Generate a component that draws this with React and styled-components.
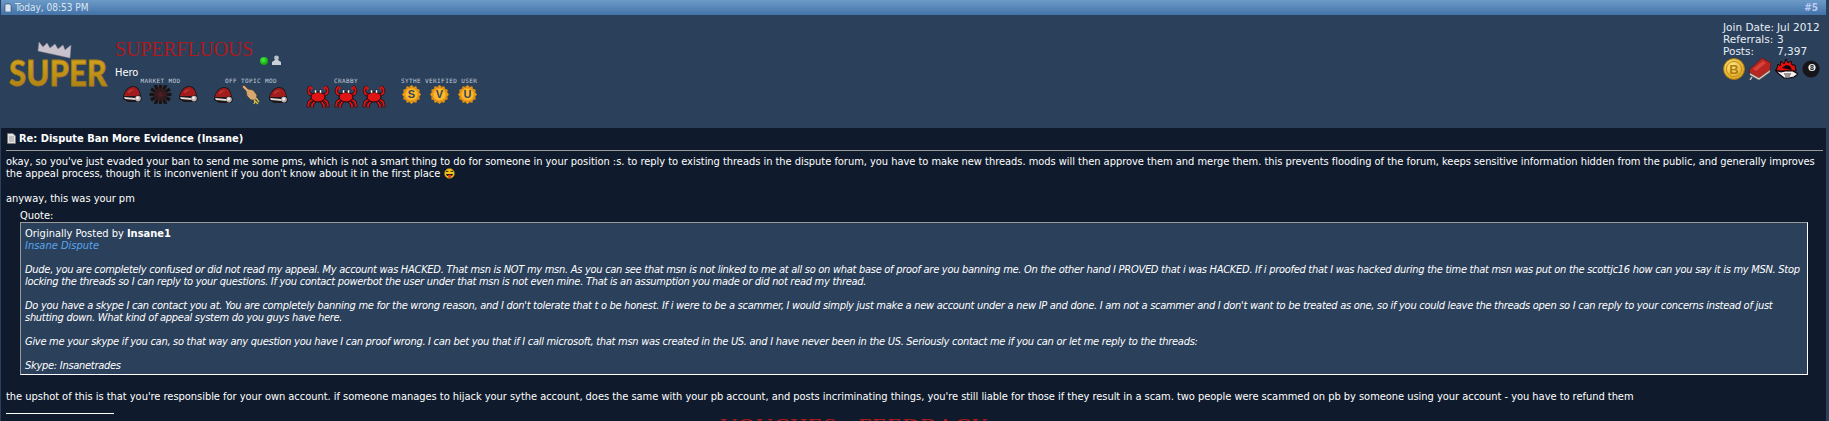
import React from 'react'
import styled, { createGlobalStyle } from 'styled-components'

const Global = createGlobalStyle`
  html, body {
    margin: 0;
    height: 421px;
    overflow: hidden;
    background: #2b405b;
  }
  body {
    font-family: "DejaVu Sans Condensed", "DejaVu Sans", sans-serif;
    font-size: 11px;
    line-height: 12px;
    color: #fff;
  }
`

const Page = styled.div`
  display: flex;
  flex-direction: column;
  height: 421px;
  overflow: hidden;
  padding: 0 3px 0 1px;
`

const TitleBar = styled.div`
  display: flex;
  align-items: center;
  justify-content: space-between;
  flex: 0 0 15px;
  padding: 0 8px 0 3px;
  background: linear-gradient(#6d9bc8, #4372a8);
  color: #dbe6f2;
`

const DateText = styled.span`
  display: flex;
  align-items: center;
  gap: 3px;
  font-size: 10px;
`

const PostNumber = styled.span`
  color: #bcc9f2;
  font-weight: bold;
  font-size: 10px;
`

const UserHeader = styled.div`
  display: flex;
  justify-content: space-between;
  flex: 0 0 113px;
  background: #2b405b;
`

const UserLeft = styled.div`
  display: flex;
  padding: 22px 0 0 7px;
`

const UserInfo = styled.div`
  display: flex;
  flex-direction: column;
  margin-left: 5px;
`

const NameRow = styled.div`
  display: flex;
  align-items: flex-end;
  gap: 4px;
  height: 28px;
`

const Name = styled.span`
  font-family: "Liberation Serif", serif;
  font-size: 20px;
  line-height: 24px;
  letter-spacing: -0.2px;
  color: #ab1a1c;
  margin-right: 3px;
  position: relative;
  top: -4px;
`

const Rank = styled.div`
  line-height: 14px;
  margin-top: 1px;
`

const Badges = styled.div`
  display: flex;
  margin: -2px 0 0 8px;
`

const BadgeGroup = styled.div`
  display: flex;
  flex-direction: column;
  align-items: center;
  margin-right: ${p => p.$gap || 0}px;
`

const BadgeLabel = styled.span`
  font-family: "DejaVu Sans Mono", monospace;
  font-size: 6px;
  line-height: 6px;
  letter-spacing: 0.4px;
  color: #c4d0dc;
  white-space: nowrap;
`

const BadgeIcons = styled.div`
  display: flex;
  align-items: center;
  gap: ${p => p.$gap}px;
  margin-top: 1px;
`

const UserStats = styled.div`
  display: flex;
  flex-direction: column;
  width: 103px;
  padding-top: 6px;
  color: #e6edf5;
  font-family: "DejaVu Sans", sans-serif;
  font-size: 10.5px;
`

const StatsGrid = styled.div`
  display: grid;
  grid-template-columns: 54px auto;
`

const Awards = styled.div`
  display: flex;
  align-items: center;
  gap: 4px;
  margin-top: 1px;
`

const PostBody = styled.div`
  flex: 1;
  background: #0f1b2c;
  padding: 4px 3px 0 5px;
  min-height: 0;
`

const PostTitle = styled.div`
  display: flex;
  align-items: center;
  gap: 3px;
  font-weight: bold;
  line-height: 13px;
  padding-left: 1px;
`

const Rule = styled.div`
  height: 1px;
  background: #9a9a9a;
  margin: 5px 0 5px;
`

const Paragraph = styled.div`
  letter-spacing: -0.03px;
`

const Spacer = styled.div`
  height: 13px;
`

const QuoteWrap = styled.div`
  margin: 5px 15px 0 14px;
`

const QuoteBox = styled.div`
  padding: 5px 4px 3px;
  height: 153px;
  box-sizing: border-box;
  background: #2b405b;
  border: 1px solid;
  border-color: #9a9a9a #fff #fff #9a9a9a;
`

const QuoteAuthor = styled.b`
  font-weight: bold;
`

const QuoteTitle = styled.div`
  color: #5aa6ee;
  font-style: italic;
`

const QuoteText = styled.div`
  font-style: italic;
  letter-spacing: -0.28px;
  margin-top: 12px;
`

const After = styled.div`
  margin-top: 16px;
`

const SigRule = styled.div`
  width: 108px;
  height: 1px;
  background: #fff;
  margin-top: 10px;
`

const SigTitle = styled.div`
  font-family: "Liberation Serif", serif;
  font-size: 24px;
  line-height: 24px;
  color: #a81a1c;
  text-align: center;
  margin-left: -120px;
  letter-spacing: 0.5px;
`

const Emoji = styled.svg`
  vertical-align: -2px;
  margin-left: 1px;
`

function NoteIcon() {
  return (
    <svg width="8" height="9" viewBox="0 0 8 9">
      <path d="M1 1h5l1 1v7H1z" fill="#dfe6f0" stroke="#23406a" strokeWidth="0.6" />
    </svg>
  )
}

function DocIcon() {
  return (
    <svg width="9" height="11" viewBox="0 0 9 11">
      <path d="M.5.5h5.5l2.5 2.5v7.5h-8z" fill="#e4e4e4" stroke="#777" strokeWidth="0.7" />
      <path d="M2 4h5M2 6h5M2 8h5" stroke="#888" strokeWidth="0.8" />
    </svg>
  )
}

function Logo() {
  return (
    <svg width="102" height="52" viewBox="0 0 102 52">
      <defs>
        <linearGradient id="gold" x1="0" x2="0" y1="0" y2="1">
          <stop offset="0" stopColor="#dcaa22" />
          <stop offset="1" stopColor="#a67c12" />
        </linearGradient>
      </defs>
      <path
        d="M30 14L31 5l4 5 4-4 3 5 5-4 3 5 5-4 2 5 6-5-1 13z"
        fill="#c9c2cc"
        stroke="#8f8a96"
        strokeWidth="0.5"
      />
      <text
        transform="translate(1 49) scale(0.86 1)"
        textLength="114"
        lengthAdjust="spacingAndGlyphs"
        fontFamily="Lato, sans-serif"
        fontWeight="900"
        fontSize="36"
        fill="url(#gold)"
        stroke="#a67c12"
        strokeWidth="0.8"
      >
        SUPER
      </text>
    </svg>
  )
}

function SantaHat() {
  return (
    <svg width="19" height="17" viewBox="0 0 19 17">
      <path d="M0 11C1 5 5 0 10 0c5 0 7 4 8 10l1 3-2 3H5l-5-3z" fill="#1e1618" />
      <path d="M1 10C2 5 6 1 10 1c4 0 6 3 7 8l-5 1z" fill="#a31c1d" />
      <path d="M5 6c2-2 4-3 6-2-2 0-4 1-5 3z" fill="#c84a48" />
      <path d="M1 11l11 1 1 2-11-1z" fill="#e4dcdc" />
      <circle cx="15" cy="12.6" r="2.8" fill="#b8b0b0" />
      <circle cx="14.6" cy="12" r="1.5" fill="#f0eaea" />
    </svg>
  )
}

function SpikyBall() {
  const spikes = [0, 30, 60, 90, 120, 150]
  return (
    <svg width="23" height="19" viewBox="0 0 23 19">
      <g transform="translate(11.5 9.5)">
        {spikes.map(a => (
          <path key={a} d="M-11-1.6L11-1.6 11 1.6-11 1.6z" fill="#181416" transform={`rotate(${a})`} />
        ))}
        <circle r="6.6" fill="#221a1c" />
        {spikes.map(a => (
          <path key={a} d="M-8 0L8 0" stroke="#5a2024" strokeWidth="0.7" transform={`rotate(${a + 15})`} />
        ))}
      </g>
    </svg>
  )
}

function Chicken() {
  return (
    <svg width="20" height="20" viewBox="0 0 20 20">
      <path d="M1 2l2-2 4 4 5 1 4 5-1 5-5 0-4-4-1-5z" fill="#d6a872" stroke="#4a3420" strokeWidth="0.7" />
      <path d="M13 15l4 4M15 13l3 4M14 16l-1 3" stroke="#d9c040" strokeWidth="1.3" />
    </svg>
  )
}

function Crab() {
  return (
    <svg width="24" height="23" viewBox="0 0 24 23">
      <g fill="none" stroke="#1a0808" strokeWidth="3" strokeLinecap="round">
        <path d="M4 2C1 5 2 9 6 10M20 2c3 3 2 7-2 8M7 14l-4 3-1 4M17 14l4 3 1 4M9 16l-3 4v2M15 16l3 4v2" />
      </g>
      <g fill="none" stroke="#e01414" strokeWidth="1.8" strokeLinecap="round">
        <path d="M4 2C1 5 2 9 6 10M20 2c3 3 2 7-2 8M7 14l-4 3-1 4M17 14l4 3 1 4M9 16l-3 4v2M15 16l3 4v2" />
      </g>
      <path d="M4 1l3 2-2 3z" fill="#e01414" />
      <path d="M20 1l-3 2 2 3z" fill="#e01414" />
      <ellipse cx="12" cy="12" rx="7" ry="5" fill="#e01414" stroke="#1a0808" />
      <rect x="8.5" y="5" width="2" height="3" fill="#fff" stroke="#222" strokeWidth="0.5" />
      <rect x="13.5" y="5" width="2" height="3" fill="#fff" stroke="#222" strokeWidth="0.5" />
    </svg>
  )
}

function Sun({ letter }) {
  const rays = [0, 30, 60, 90, 120, 150, 180, 210, 240, 270, 300, 330]
  return (
    <svg width="19" height="19" viewBox="0 0 19 19">
      <g transform="translate(9.5 9.5)">
        {rays.map(a => (
          <path key={a} d="M-2.4-7.4L0-9.5 2.4-7.4z" fill="#ee9610" transform={`rotate(${a})`} />
        ))}
        <circle r="7.6" fill="#f29e14" />
        <circle r="5.8" fill="#ffb92c" />
      </g>
      <text
        x="9.5"
        y="13"
        textAnchor="middle"
        fontFamily="Liberation Sans, sans-serif"
        fontWeight="bold"
        fontSize="11"
        fill="#34465c"
      >
        {letter}
      </text>
    </svg>
  )
}

function Person() {
  return (
    <svg width="9" height="10" viewBox="0 0 9 10">
      <circle cx="4.5" cy="3" r="2.4" fill="#b8c0c8" />
      <path d="M3 5h3l3 2v3H0V7z" fill="#c8d0d8" />
    </svg>
  )
}

function Online() {
  return (
    <svg width="8" height="8" viewBox="0 0 8 8">
      <defs>
        <radialGradient id="on" cx="0.4" cy="0.35" r="0.7">
          <stop offset="0" stopColor="#4cf03c" />
          <stop offset="1" stopColor="#0c9a0c" />
        </radialGradient>
      </defs>
      <circle cx="4" cy="4" r="4" fill="url(#on)" />
    </svg>
  )
}

function Bitcoin() {
  return (
    <svg width="22" height="22" viewBox="0 0 22 22">
      <defs>
        <radialGradient id="coin" cx="0.4" cy="0.35" r="0.75">
          <stop offset="0" stopColor="#ffe88a" />
          <stop offset="1" stopColor="#d89a10" />
        </radialGradient>
      </defs>
      <circle cx="11" cy="11" r="10.5" fill="url(#coin)" stroke="#a87408" />
      <circle cx="11" cy="11" r="7.6" fill="none" stroke="#c48c10" />
      <text x="11" y="15.5" textAnchor="middle" fontFamily="Liberation Sans, sans-serif" fontWeight="bold" fontSize="13" fill="#b07c08">
        B
      </text>
    </svg>
  )
}

function Book() {
  return (
    <svg width="22" height="22" viewBox="0 0 22 22">
      <path d="M0 12L13 0l9 5-1 7-11 8-9-5z" fill="#b82622" stroke="#5e1210" strokeWidth="0.6" />
      <path d="M4 11L14 3l3 2-10 8z" fill="#d8423a" />
      <path d="M1 15l9 5 11-8v2l-11 8-9-5z" fill="#e0d8c8" stroke="#7a6a5a" strokeWidth="0.5" />
      <path d="M3 19l-2 3" stroke="#c8c0b0" strokeWidth="1.4" />
    </svg>
  )
}

function FlameHand() {
  return (
    <svg width="23" height="20" viewBox="0 0 23 20">
      <path d="M1 12L3 5l2 2 1-5 3 3 2-5 2 4 3-2 1 4 3 0 1 6z" fill="#e01010" stroke="#120404" strokeWidth="1" />
      <path d="M7 9l4-3 4 1 2 4z" fill="#120404" />
      <path d="M0 11l6 2 4-1 8 0 5 3-4 3-5 1H9l-5-4z" fill="#f6f2f2" stroke="#120404" strokeWidth="1.1" />
      <path d="M9 15h7M10 17h5" stroke="#120404" strokeWidth="0.8" />
    </svg>
  )
}

function EightBall() {
  return (
    <svg width="18" height="18" viewBox="0 0 18 18">
      <circle cx="9" cy="9" r="8.6" fill="#16161a" />
      <circle cx="10" cy="7.5" r="3.6" fill="#f2f2f2" />
      <text x="10" y="10" textAnchor="middle" fontFamily="Liberation Sans, sans-serif" fontWeight="bold" fontSize="7" fill="#111">
        8
      </text>
    </svg>
  )
}

function TongueFace() {
  return (
    <Emoji width="11" height="11" viewBox="0 0 11 11">
      <circle cx="5.5" cy="5.5" r="5" fill="#f2c21c" stroke="#8a6a10" strokeWidth="0.6" />
      <path d="M2 3.4h2.4M6.6 3.4H9" stroke="#222" strokeWidth="1" />
      <path d="M2 6h7L8 8H3z" fill="#2a1a10" />
      <path d="M4 7h3.4L7 10H4.4z" fill="#e04030" />
    </Emoji>
  )
}

export default function App() {
  return (
    <Page>
      <Global />
      <TitleBar>
        <DateText>
          <NoteIcon />
          Today, 08:53 PM
        </DateText>
        <PostNumber>#5</PostNumber>
      </TitleBar>

      <UserHeader>
        <UserLeft>
          <Logo />
          <UserInfo>
            <NameRow>
              <Name>SUPERFLUOUS</Name>
              <Online />
              <Person />
            </NameRow>
            <Rank>Hero</Rank>
            <Badges>
              <BadgeGroup $gap={16}>
                <BadgeLabel>MARKET MOD</BadgeLabel>
                <BadgeIcons $gap={7}>
                  <SantaHat />
                  <SpikyBall />
                  <SantaHat />
                </BadgeIcons>
              </BadgeGroup>
              <BadgeGroup $gap={18}>
                <BadgeLabel>OFF TOPIC MOD</BadgeLabel>
                <BadgeIcons $gap={8}>
                  <SantaHat />
                  <Chicken />
                  <SantaHat />
                </BadgeIcons>
              </BadgeGroup>
              <BadgeGroup $gap={15}>
                <BadgeLabel>CRABBY</BadgeLabel>
                <BadgeIcons $gap={4}>
                  <Crab />
                  <Crab />
                  <Crab />
                </BadgeIcons>
              </BadgeGroup>
              <BadgeGroup>
                <BadgeLabel>SYTHE VERIFIED USER</BadgeLabel>
                <BadgeIcons $gap={9}>
                  <Sun letter="S" />
                  <Sun letter="V" />
                  <Sun letter="U" />
                </BadgeIcons>
              </BadgeGroup>
            </Badges>
          </UserInfo>
        </UserLeft>

        <UserStats>
          <StatsGrid>
            <span>Join Date:</span>
            <span>Jul 2012</span>
            <span>Referrals:</span>
            <span>3</span>
            <span>Posts:</span>
            <span>7,397</span>
          </StatsGrid>
          <Awards>
            <Bitcoin />
            <Book />
            <FlameHand />
            <EightBall />
          </Awards>
        </UserStats>
      </UserHeader>

      <PostBody>
        <PostTitle>
          <DocIcon />
          Re: Dispute Ban More Evidence (Insane)
        </PostTitle>
        <Rule />
        <Paragraph>
          okay, so you've just evaded your ban to send me some pms, which is not a smart thing to do for someone in your position :s. to reply to existing threads in the dispute forum, you have to make new threads. mods will then approve them and merge them. this prevents flooding of the forum, keeps sensitive information hidden from the public, and generally improves the appeal process, though it is inconvenient if you don't know about it in the first place <TongueFace />
        </Paragraph>
        <Spacer />
        <Paragraph>anyway, this was your pm</Paragraph>
        <QuoteWrap>
          <div>Quote:</div>
          <QuoteBox>
            <div>
              Originally Posted by <QuoteAuthor>Insane1</QuoteAuthor>
            </div>
            <QuoteTitle>Insane Dispute</QuoteTitle>
            <QuoteText>
              Dude, you are completely confused or did not read my appeal. My account was HACKED. That msn is NOT my msn. As you can see that msn is not linked to me at all so on what base of proof are you banning me. On the other hand I PROVED that i was HACKED. If i proofed that I was hacked during the time that msn was put on the scottjc16 how can you say it is my MSN. Stop locking the threads so I can reply to your questions. If you contact powerbot the user under that msn is not even mine. That is an assumption you made or did not read my thread.
            </QuoteText>
            <QuoteText>
              Do you have a skype I can contact you at. You are completely banning me for the wrong reason, and I don't tolerate that t o be honest. If i were to be a scammer, I would simply just make a new account under a new IP and done. I am not a scammer and I don't want to be treated as one, so if you could leave the threads open so I can reply to your concerns instead of just shutting down. What kind of appeal system do you guys have here.
            </QuoteText>
            <QuoteText>
              Give me your skype if you can, so that way any question you have I can proof wrong. I can bet you that if I call microsoft, that msn was created in the US. and I have never been in the US. Seriously contact me if you can or let me reply to the threads:
            </QuoteText>
            <QuoteText>Skype: Insanetrades</QuoteText>
          </QuoteBox>
        </QuoteWrap>
        <After>
          <Paragraph>
            the upshot of this is that you're responsible for your own account. if someone manages to hijack your sythe account, does the same with your pb account, and posts incriminating things, you're still liable for those if they result in a scam. two people were scammed on pb by someone using your account - you have to refund them
          </Paragraph>
        </After>
        <SigRule />
        <SigTitle>VOUCHES - FEEDBACK</SigTitle>
      </PostBody>
    </Page>
  )
}
